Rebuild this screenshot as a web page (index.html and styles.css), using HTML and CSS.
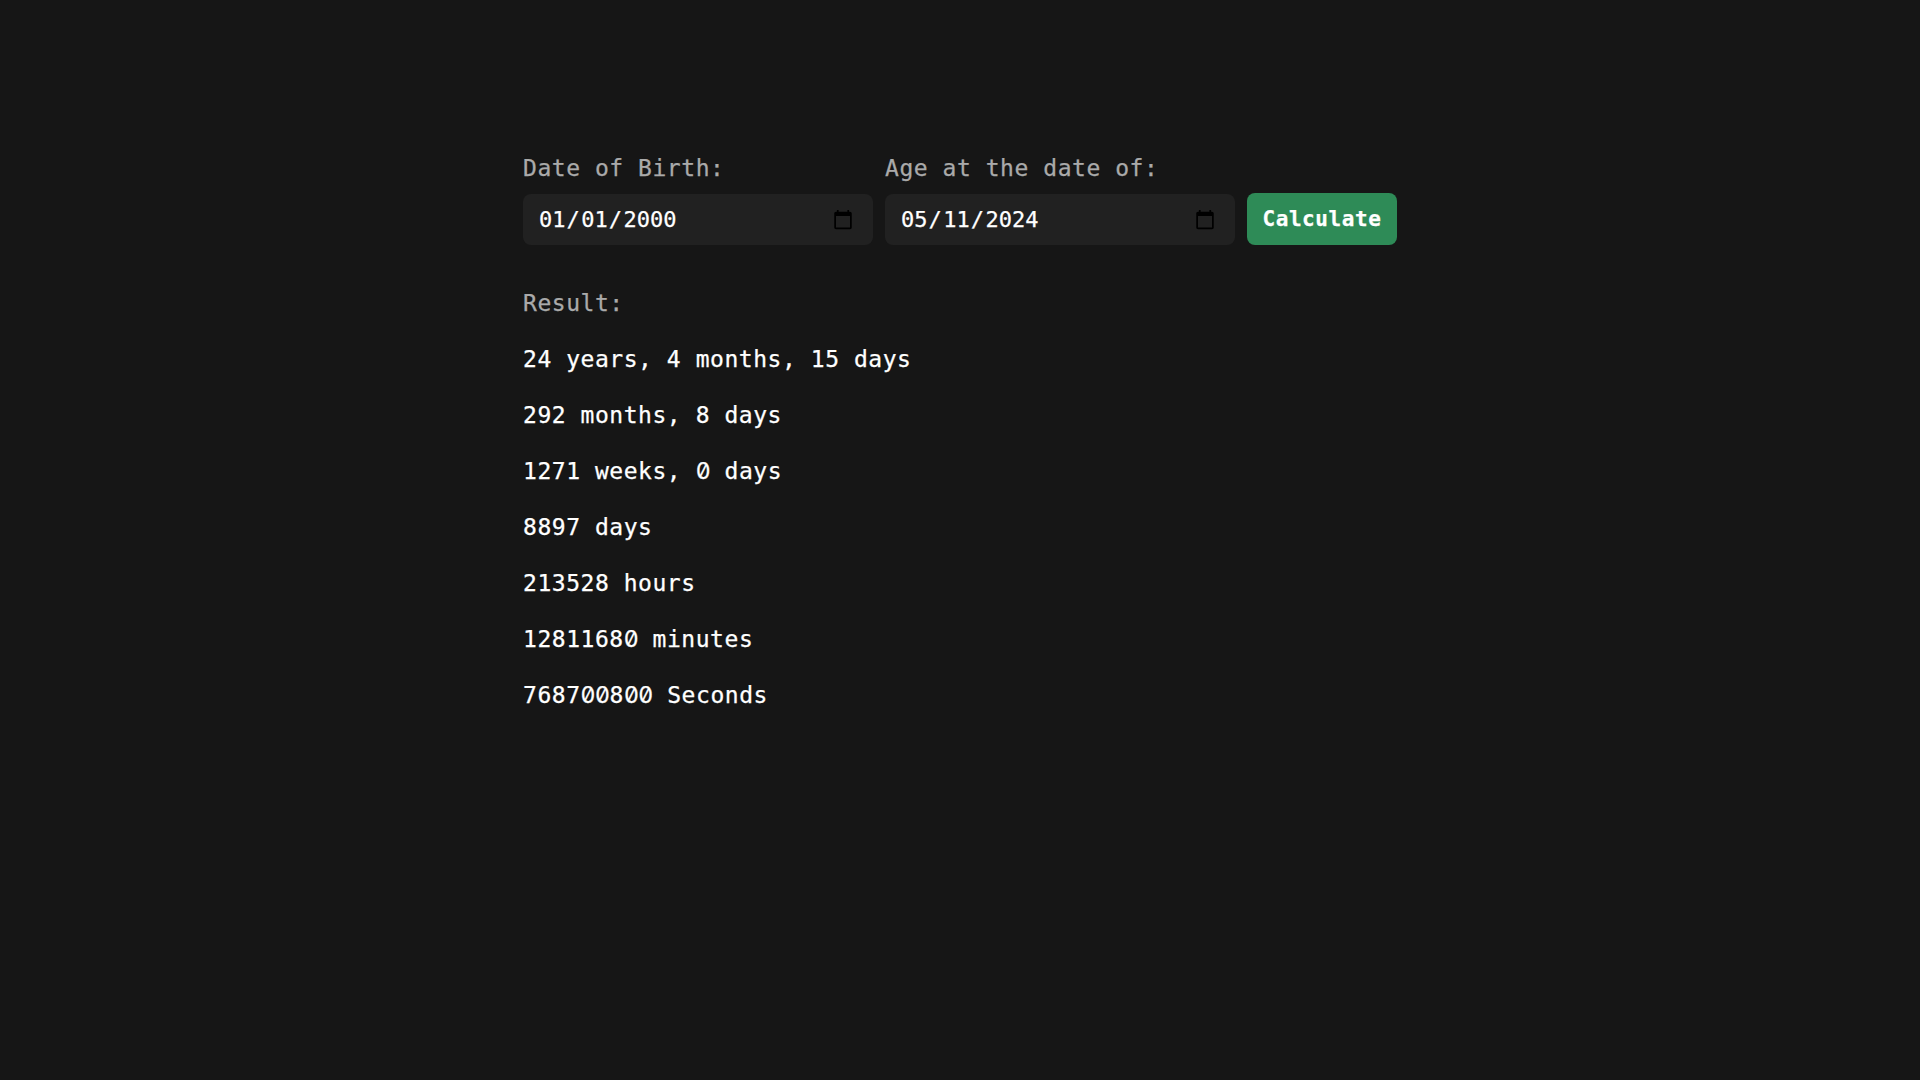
FILE: index.html
```
<!DOCTYPE html>
<html lang="en-US">
<head>
<meta charset="utf-8">
<title>Age Calculator</title>
<link rel="stylesheet" href="styles.css">
</head>
<body>
<main class="calculator">
  <form class="form">
    <label class="field">Date of Birth:
      <input class="date" type="date" value="2000-01-01">
    </label>
    <label class="field">Age at the date of:
      <input class="date" type="date" value="2024-05-11">
    </label>
    <button class="submit" type="button">Calculate</button>
  </form>
  <section class="results">
    <p class="heading">Result:</p>
    <p>24 years, 4 months, 15 days</p>
    <p>292 months, 8 days</p>
    <p>1271 weeks, <span class="zero">0</span> days</p>
    <p>8897 days</p>
    <p>213528 hours</p>
    <p>1281168<span class="zero">0</span> minutes</p>
    <p>7687<span class="zero">00</span>8<span class="zero">00</span> Seconds</p>
  </section>
</main>
</body>
</html>
```
FILE: styles.css
```
* { box-sizing: border-box; }
body {
  margin: 0;
  background: #161616;
  color: #fff;
  font-family: "DejaVu Sans Mono", "Liberation Mono", monospace;
  font-size: 23px;
  letter-spacing: 0.54px;
  line-height: 32px;
  -webkit-text-stroke: 0.25px currentColor;
}
.calculator { width: 874px; margin: 0 auto; padding-top: 152px; }
.form { display: flex; align-items: flex-end; gap: 12px; }
.field { display: flex; flex-direction: column; gap: 10px; width: 350px; color: #aaa; }
.date {
  width: 100%;
  height: 51px;
  padding: 0 17px 0 15px;
  border: 0;
  border-radius: 8px;
  background: #212121;
  color: #fff;
  font: 22px "DejaVu Sans Mono", "Liberation Mono", monospace;
  letter-spacing: 0.5px;
}
.date::-webkit-datetime-edit-month-field,
.date::-webkit-datetime-edit-day-field,
.date::-webkit-datetime-edit-year-field {
  font-family: Inter, sans-serif;
  font-size: 21px;
  font-feature-settings: "zero", "tnum";
  letter-spacing: 0;
}
.submit {
  width: 150px;
  height: 52px;
  padding: 0;
  border: 0;
  border-radius: 8px;
  background: #2e8b57;
  color: #fff;
  font: bold 21px "DejaVu Sans Mono", "Liberation Mono", monospace;
  letter-spacing: 0.6px;
}
.results { display: flex; flex-direction: column; gap: 24px; margin-top: 42px; }
.results p { margin: 0; }
.results .heading { color: #aaa; }
.zero {
  font-family: Inter, sans-serif;
  font-feature-settings: "zero", "tnum";
  letter-spacing: -0.45px;
}
```
